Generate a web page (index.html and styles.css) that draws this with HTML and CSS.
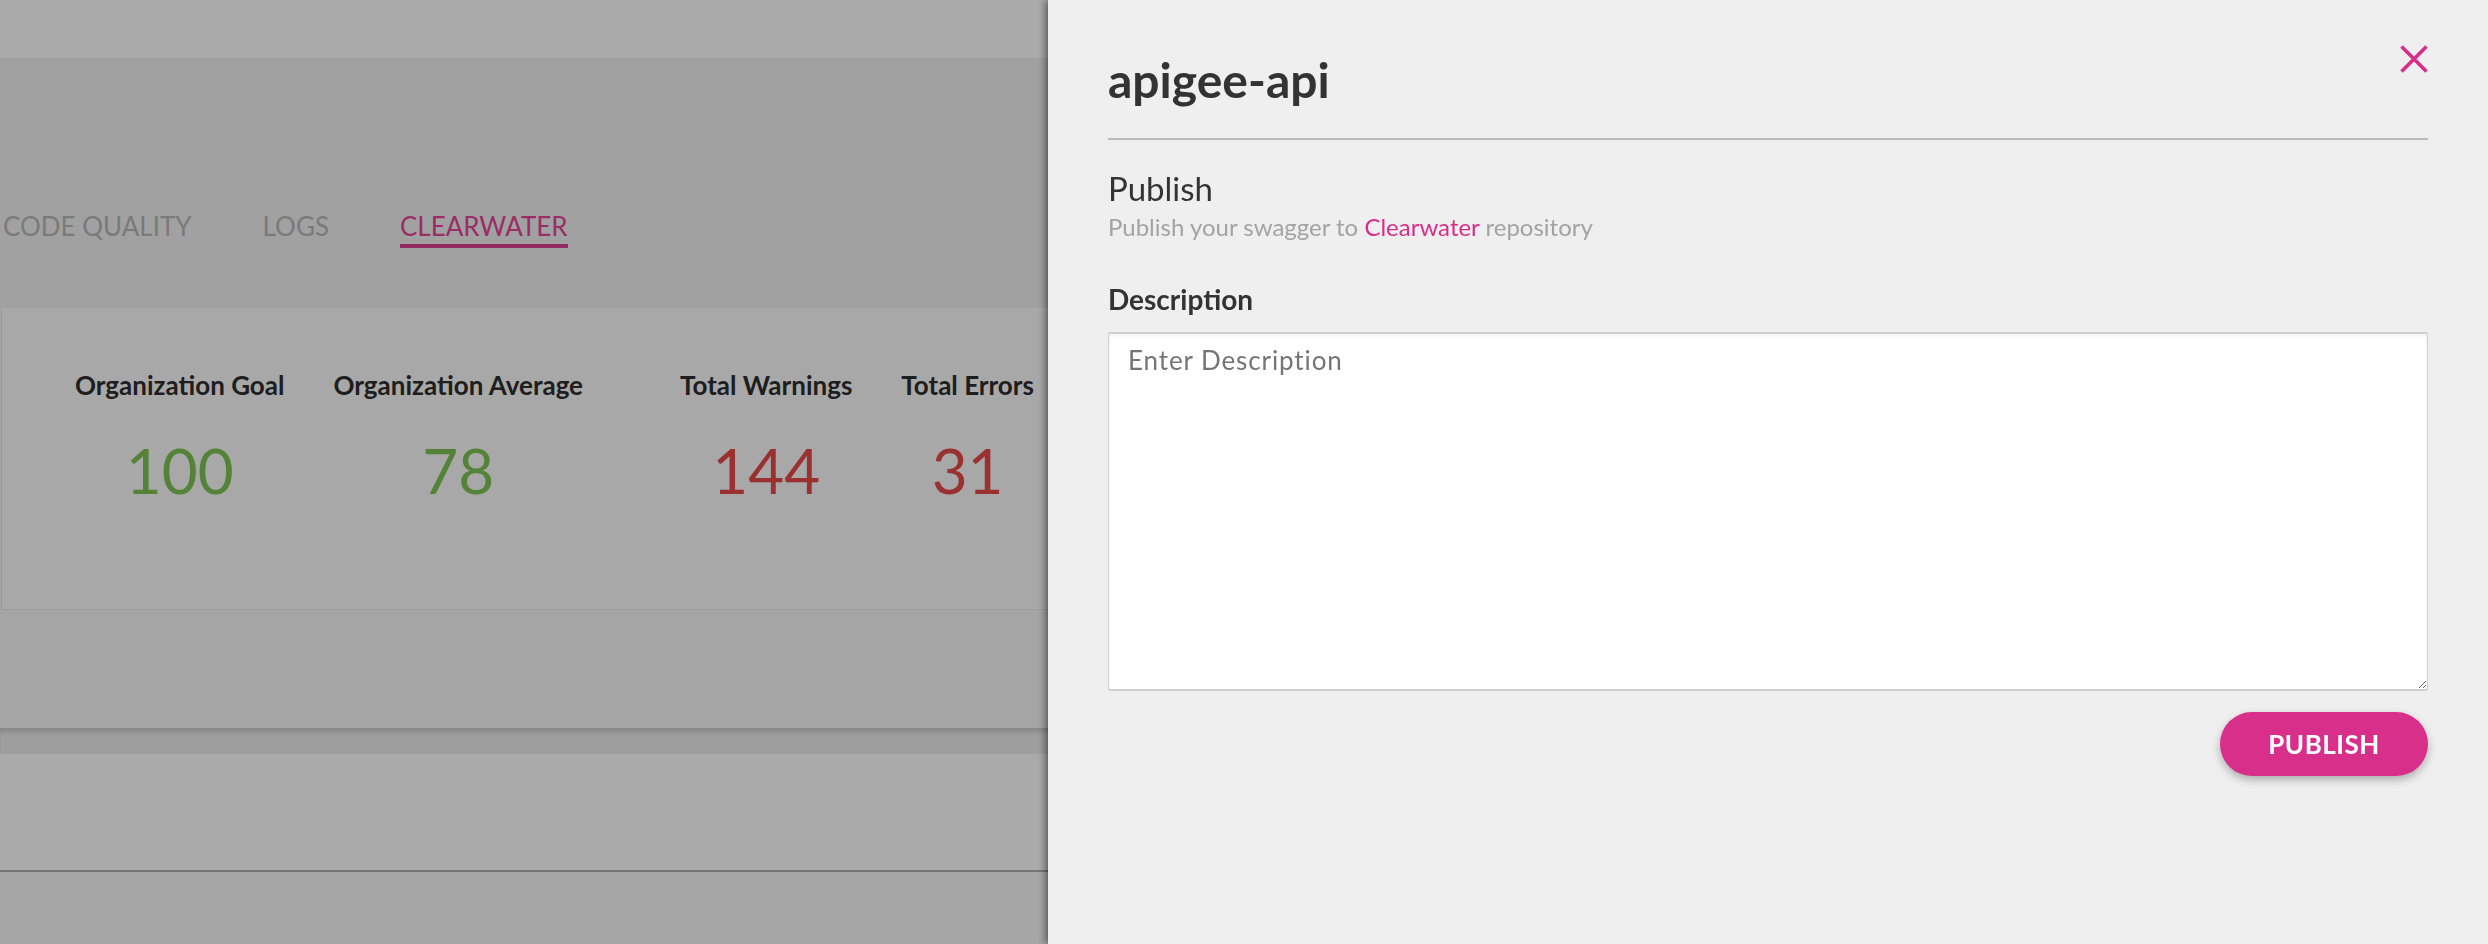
FILE: index.html
```html
<!DOCTYPE html>
<html lang="en">
<head>
<meta charset="utf-8">
<title>apigee-api – Publish</title>
<link rel="stylesheet" href="styles.css">
</head>
<body>
<div class="page">
  <header class="topbar"></header>
  <section class="tabs-area">
    <nav class="tabs">
      <a class="tab">CODE QUALITY</a>
      <a class="tab">LOGS</a>
      <a class="tab active">CLEARWATER</a>
    </nav>
  </section>
  <section class="stats-card">
    <div class="stats">
      <div class="stat">
        <div class="stat-label">Organization Goal</div>
        <div class="stat-value good">100</div>
      </div>
      <div class="stat">
        <div class="stat-label">Organization Average</div>
        <div class="stat-value good">78</div>
      </div>
      <div class="stat wide-gap">
        <div class="stat-label">Total Warnings</div>
        <div class="stat-value bad">144</div>
      </div>
      <div class="stat">
        <div class="stat-label">Total Errors</div>
        <div class="stat-value bad">31</div>
      </div>
    </div>
  </section>
  <section class="band-a"></section>
  <section class="band-b"></section>
  <section class="band-c"></section>
  <section class="band-d"></section>
</div>

<div class="backdrop"></div>

<aside class="drawer">
  <header class="drawer-head">
    <h1 class="drawer-title">apigee-api</h1>
    <button class="close" aria-label="Close">
      <svg width="28" height="28" viewBox="0 0 28 28"><path d="M1.5 1.5 L26.5 26.5 M26.5 1.5 L1.5 26.5" stroke="#d82d88" stroke-width="3.6" fill="none"/></svg>
    </button>
  </header>
  <h2 class="section-title">Publish</h2>
  <p class="section-sub">Publish your swagger to <span class="pink">Clearwater</span> repository</p>
  <label class="field-label" for="desc">Description</label>
  <textarea id="desc" class="desc" placeholder="Enter Description"></textarea>
  <div class="actions">
    <button class="publish">PUBLISH</button>
  </div>
</aside>
</body>
</html>
```

FILE: styles.css
```css
* { box-sizing: border-box; }
html, body {
  margin: 0;
  padding: 0;
  width: 2488px;
  height: 944px;
  overflow: hidden;
  font-family: Lato, "Open Sans", sans-serif;
}
.page {
  width: 2488px;
  height: 944px;
  background: #fafafa;
  display: flex;
  flex-direction: column;
}
.topbar {
  height: 58px;
  background: #ffffff;
  flex: none;
}
.tabs-area {
  height: 250px;
  background: #f2f2f2;
  flex: none;
  padding-top: 152px;
}
.tabs {
  display: flex;
  gap: 71px;
  padding-left: 3px;
}
.tab {
  font-size: 26px;
  line-height: 32px;
  color: #b8b8b8;
  padding-bottom: 2px;
  border-bottom: 4px solid transparent;
}
.tab.active {
  color: #e8449a;
  border-bottom-color: #dd3f93;
}
.stats-card {
  height: 302px;
  flex: none;
  background: #fdfdfd;
  border-left: 1px solid #e6e6e6;
  border-bottom: 1px solid #ececec;
  margin-left: 1px;
  padding-top: 61px;
  padding-left: 73px;
}
.stats {
  display: flex;
  gap: 49px;
}
.stat {
  display: flex;
  flex-direction: column;
  align-items: center;
}
.stat.wide-gap { margin-left: 48px; }
.stat-label {
  font-weight: 700;
  font-size: 26px;
  line-height: 32px;
  color: #2e2e2e;
  white-space: nowrap;
}
.stat-value {
  margin-top: 38px;
  font-size: 62px;
  line-height: 62px;
}
.stat-value.good { color: #7ec353; }
.stat-value.bad { color: #e84949; }
.band-a {
  height: 118px;
  flex: none;
  background: #f8f8f8;
}
.band-b {
  height: 26px;
  flex: none;
  background: #eeeeee;
  box-shadow: inset 0 6px 6px -3px rgba(0,0,0,0.18);
}
.band-c {
  height: 118px;
  flex: none;
  background: #ffffff;
  border-bottom: 2px solid #b2b2b2;
}
.band-d {
  flex: 1;
  background: #f9f9f9;
}
.backdrop {
  position: fixed;
  inset: 0;
  background: rgba(0,0,0,0.335);
}
.drawer {
  position: fixed;
  top: 0;
  right: 0;
  bottom: 0;
  width: 1440px;
  background: #efefef;
  box-shadow: -2px 0 8px rgba(0,0,0,0.55);
  padding: 50px 60px 0 60px;
  display: flex;
  flex-direction: column;
}
.drawer-head {
  display: flex;
  justify-content: space-between;
  align-items: flex-start;
  padding-bottom: 28px;
  border-bottom: 2px solid #bbbbbb;
}
.drawer-title {
  margin: 0;
  font-size: 48px;
  line-height: 60px;
  font-weight: 700;
  color: #333333;
}
.close {
  margin-top: -5px;
  padding: 0;
  border: 0;
  background: none;
  width: 28px;
  height: 28px;
  display: block;
}
.close svg { display: block; }
.section-title {
  margin: 28px 0 0 0;
  font-size: 33px;
  line-height: 40px;
  font-weight: 400;
  color: #333333;
}
.section-sub {
  margin: 4px 0 0 0;
  font-size: 24px;
  line-height: 30px;
  color: #a3a3a3;
}
.pink { color: #d82d88; }
.field-label {
  margin-top: 41px;
  font-size: 28px;
  line-height: 32px;
  font-weight: 700;
  color: #333333;
}
.desc {
  margin-top: 17px;
  width: 1320px;
  height: 359px;
  border-style: solid;
  border-color: #cfcfcf;
  border-width: 2px 1px 2px 1px;
  border-radius: 2px;
  box-shadow: inset 0 2px 3px rgba(0,0,0,0.06);
  background: #ffffff;
  padding: 11px 19px;
  font-family: Lato, "Open Sans", sans-serif;
  font-size: 26px;
  letter-spacing: 0.9px;
  line-height: 1.2;
  color: #333;
  resize: both;
}
.desc::placeholder { color: #757575; }
.actions {
  display: flex;
  justify-content: flex-end;
  margin-top: 21px;
}
.publish {
  height: 64px;
  width: 208px;
  border: 0;
  border-radius: 32px;
  background: #d82f8a;
  color: #ffffff;
  font-family: Lato, "Open Sans", sans-serif;
  font-weight: 700;
  font-size: 26px;
  letter-spacing: 0.5px;
  box-shadow: 0 4px 8px rgba(0,0,0,0.28);
}
```
